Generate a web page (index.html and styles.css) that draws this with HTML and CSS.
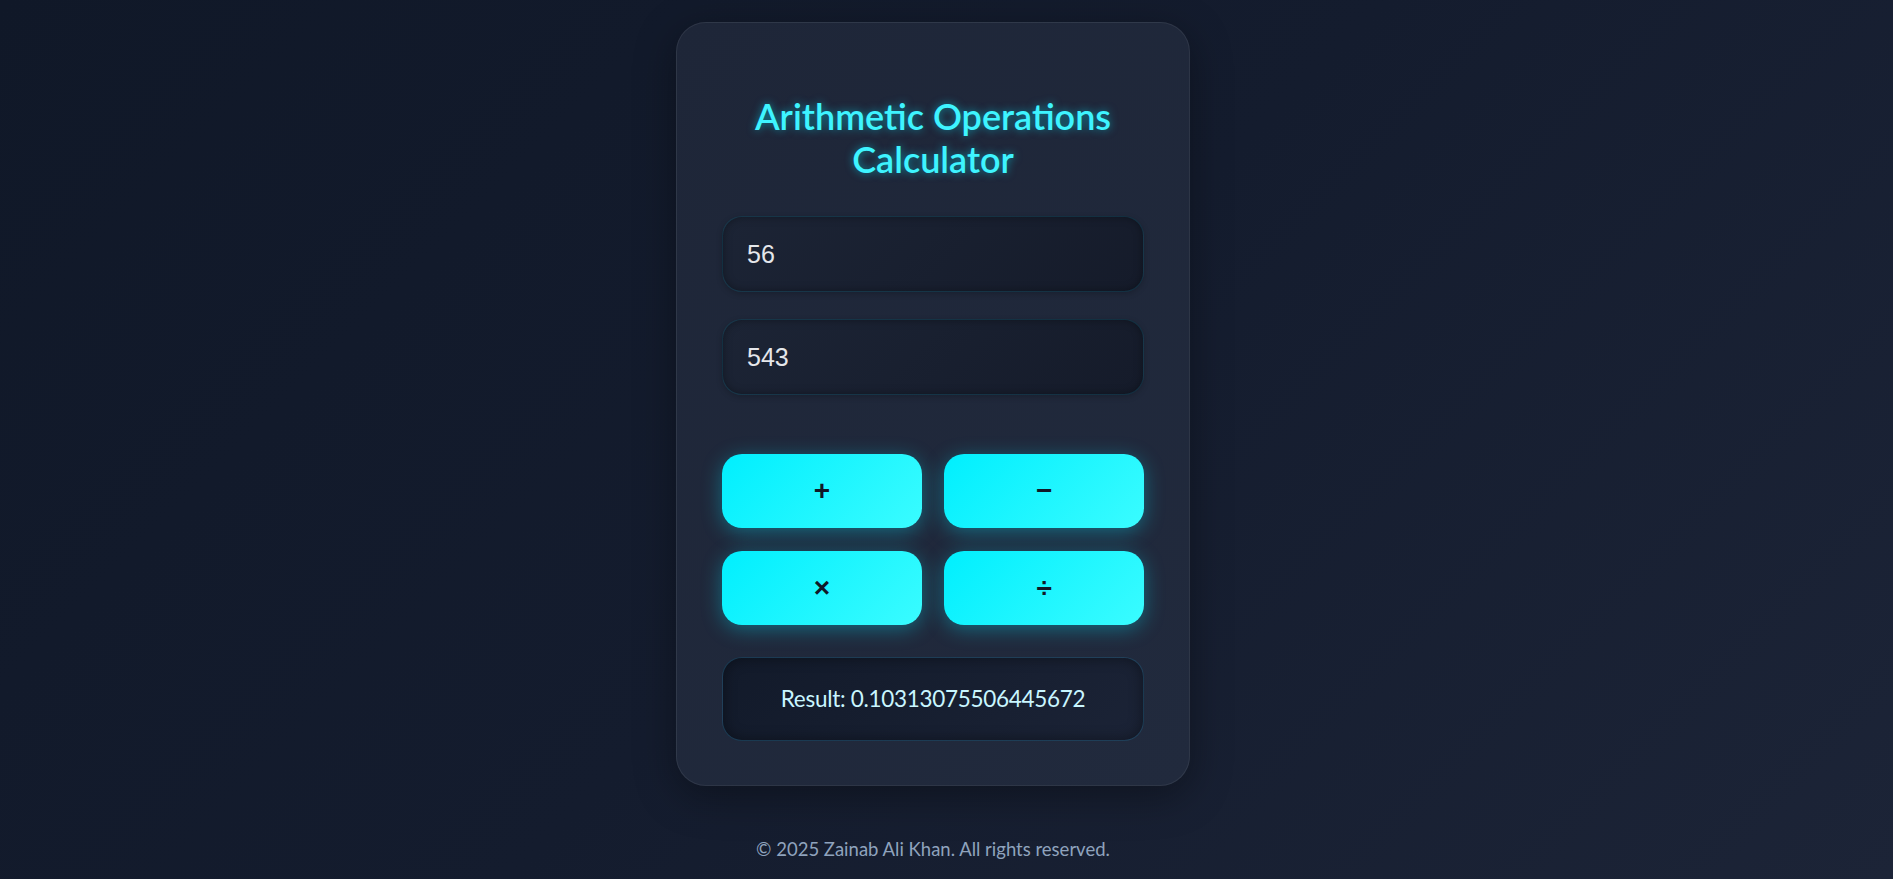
FILE: index.html
```html
<!DOCTYPE html>
<html lang="en">
<head>
<meta charset="utf-8">
<title>Arithmetic Operations Calculator</title>
<link rel="stylesheet" href="styles.css">
</head>
<body>
<main class="card">
  <h1 class="title">Arithmetic Operations Calculator</h1>
  <input class="field" type="text" value="56">
  <input class="field" type="text" value="543">
  <div class="ops">
    <button class="op">+</button>
    <button class="op">−</button>
    <button class="op">×</button>
    <button class="op">÷</button>
  </div>
  <div class="result">Result: 0.10313075506445672</div>
</main>
<footer class="footer">© 2025 Zainab Ali Khan. All rights reserved.</footer>
</body>
</html>
```
FILE: styles.css
```css
* { box-sizing: border-box; }
html, body { height: 100%; }
body {
  margin: 0;
  padding-right: 27px;
  min-height: 100vh;
  background: linear-gradient(135deg, #101828 0%, #141c2e 50%, #1c2437 100%);
  font-family: "Lato", "Liberation Sans", sans-serif;
  display: flex;
  flex-direction: column;
  align-items: center;
  overflow: hidden;
}
.card {
  margin-top: 22px;
  width: 514px;
  padding: 0 45px 44px;
  background: linear-gradient(135deg, #1e2638 0%, #212a3d 100%);
  border: 1px solid rgba(255, 255, 255, 0.07);
  border-radius: 30px;
  box-shadow: 0 10px 40px rgba(0, 0, 0, 0.35);
  display: flex;
  flex-direction: column;
}
.title {
  margin: 72px 0 35px;
  font-size: 36px;
  line-height: 43.2px;
  font-weight: 600;
  text-align: center;
  color: #3ef4ff;
  text-shadow: 0 0 8px rgba(0, 229, 255, 0.55);
}
.field {
  display: block;
  width: 100%;
  height: 76px;
  margin: 0 0 27px;
  padding: 0 24px;
  font-family: "Liberation Sans", Arial, sans-serif;
  font-size: 25px;
  color: #e5e7eb;
  background: linear-gradient(135deg, #1c2435 0%, #151b2a 100%);
  border: 1px solid rgba(0, 200, 230, 0.12);
  border-radius: 20px;
  box-shadow: inset 0 0 8px rgba(0, 0, 0, 0.35), 0 2px 6px rgba(0, 0, 0, 0.2);
  outline: none;
}
.ops {
  margin-top: 32px;
  display: grid;
  grid-template-columns: 1fr 1fr;
  gap: 22.5px;
}
.op {
  height: 74px;
  border: none;
  border-radius: 20px;
  background: linear-gradient(135deg, #00effe 0%, #3afcff 100%);
  color: #111827;
  font-family: "Liberation Sans", Arial, sans-serif;
  font-weight: 700;
  font-size: 28px;
  box-shadow: 0 4px 20px rgba(0, 229, 255, 0.35);
  cursor: pointer;
}
.result {
  margin-top: 32px;
  height: 84px;
  display: flex;
  align-items: center;
  justify-content: center;
  font-size: 22.5px;
  color: #c9f6ff;
  background: linear-gradient(135deg, #121a2a 0%, #1b2336 100%);
  border: 1px solid rgba(56, 170, 220, 0.22);
  border-radius: 20px;
  box-shadow: inset 0 0 14px rgba(0, 0, 0, 0.4);
  letter-spacing: -0.3px;
}
.footer {
  margin-top: 52px;
  font-size: 18.5px;
  color: #8fa3bd;
}
```
